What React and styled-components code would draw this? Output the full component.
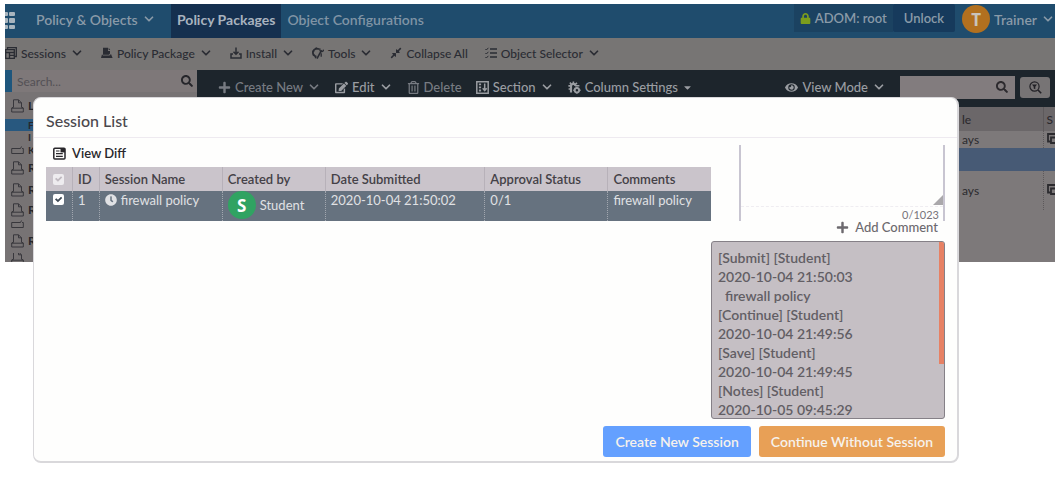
import React, { useState } from "react";
import styled, { createGlobalStyle } from "styled-components";
import { ChevronDown } from "lucide-react";
import {
  FaCaretDown,
  FaClock,
  FaCompressAlt,
  FaEdit,
  FaEye,
  FaLock,
  FaPlus,
  FaRegTrashAlt,
  FaSearch,
} from "react-icons/fa";

const SessionsIcon = () => (
  <svg width="12" height="12" viewBox="0 0 12 12" fill="none" stroke="currentColor">
    <path d="M2.5 2.5V.7h8.8v8.8H9.5M.7 2.7h8.6v8.6H.7zM.7 5.5h8.6M4.5 5.5v5.8M4.5 8.3h4.8" strokeWidth="1.3" />
  </svg>
);

const PackageIcon = () => (
  <svg width="12" height="12" viewBox="0 0 12 12" fill="currentColor">
    <path d="M2 .8h5V4h2v2.6l-1 1.2H2z" />
    <path d="M7.7.8 9.2 3H7.7z" />
    <path d="M1 7.2 0 11h11.6L10 7l-1.5 1.6H2z" />
  </svg>
);

const InstallIcon = () => (
  <svg width="12" height="12" viewBox="0 0 12 12" fill="none" stroke="currentColor" strokeWidth="1.5">
    <path d="M6 .5V7M3.5 4.7 6 7.2l2.5-2.5M3 7H1v4h10V7H9" />
  </svg>
);

const ToolsIcon = () => (
  <svg width="12" height="12" viewBox="0 0 12 12" fill="none" stroke="currentColor">
    <path d="M7 2.2A4 4 0 1 0 4.5 9.6" strokeWidth="1.8" />
    <path d="M4 .6l.6 1.6M.6 4l1.6.7M.8 8.4l1.5-.8M3.2 11.3l.7-1.6" strokeWidth="1.4" />
    <path d="m5 11.6 4.6-8.4" strokeWidth="1.6" />
    <path d="M8 1.4c-.6 2 .4 3.3 2 3.2 1-.1 1.5-.9 1.6-2M9.2 6.2v3.6" strokeWidth="1.3" />
  </svg>
);

const SelectorIcon = () => (
  <svg width="12" height="12" viewBox="0 0 12 12" fill="none" stroke="currentColor">
    <path d="M5 2h7M5 6h7M5 10h7" strokeWidth="1.3" />
    <path d="m.4 2 1 1 2-2.2M.4 6l1 1 2-2.2M.4 10l1 1 2-2.2" />
  </svg>
);

const SectionIcon = () => (
  <svg width="13" height="13" viewBox="0 0 13 13" fill="none" stroke="currentColor">
    <path d="M.8.8h11.4v11.4H.8z" strokeWidth="1.5" />
    <path d="M4 2.5v1.8M4 5.5v1.8M4 8.6v1.8" strokeWidth="2.2" />
    <path d="M8.7 2.5v7M6.7 7.2l2 2.4 2-2.4" strokeWidth="1.5" />
  </svg>
);

const ColumnsIcon = () => (
  <svg width="13" height="13" viewBox="0 0 13 13" fill="none" stroke="currentColor">
    <path d="M3 11.5V5.4a2.2 2.2 0 0 1 4.4-.6" strokeWidth="2.2" />
    <path d="M5.4.4v2.4M.4 4.9h2.4M1.8 1.6l1.4 1.3M9 1.8 7.5 3.2M7 4.7h4.4M.6 8h2" strokeWidth="1.6" />
    <circle cx="8.9" cy="9.2" r="2.2" strokeWidth="1.9" />
    <path d="M8.9 5.8v1.2M8.9 11.6v1.2M5.3 9.2h1.2M11.4 9.2h1.2" strokeWidth="1.5" />
  </svg>
);

const DiffIcon = () => (
  <svg width="13" height="13" viewBox="0 0 13 13" fill="none" stroke="currentColor">
    <rect x=".8" y="1.2" width="11.2" height="10.8" rx="1" strokeWidth="1.5" />
    <path d="M3 4h3.5M3 6.7h6.8M3 9.3h6.8" strokeWidth="1.2" />
    <path d="M7.5 1h4.6v4.4H7.5z" fill="currentColor" stroke="none" />
  </svg>
);

const FileIcon = () => (
  <svg width="13" height="14" viewBox="0 0 13 14" fill="none" stroke="currentColor">
    <path d="M2.5 8.5V.8h5l3 3v4.7M7.5.8v3h3" />
    <path d="M2.5 8 .7 9v4h11.6V9l-1.8-1M.7 9.2h11.6" />
  </svg>
);

const FolderIcon = () => (
  <svg width="13" height="8" viewBox="0 0 13 8" fill="none" stroke="currentColor">
    <path d="M4 2.5H.7v5h11.6v-5H11M3 2.5h6.5L10.5.5" />
  </svg>
);

const FilterSearchIcon = () => (
  <svg width="13" height="13" viewBox="0 0 13 13" fill="none" stroke="currentColor">
    <circle cx="5.5" cy="5.5" r="4.6" strokeWidth="1.2" />
    <path d="m9 9 3.2 3.2" strokeWidth="1.6" />
    <path d="M3 3.5h5L6.3 5.7v2.6L4.7 7.5V5.7z" fill="currentColor" stroke="none" />
  </svg>
);

const ScheduleIcon = () => (
  <svg width="8" height="11" viewBox="0 0 8 11" fill="none" stroke="currentColor" strokeWidth="1.8">
    <path d="M8 1H1v7.5h2.5M8 4.5H4V10h4" />
  </svg>
);

const GridIcon = () => (
  <svg width="11" height="18" viewBox="0 0 11 18" fill="#a9b5be">
    <rect x="-2" y="0" width="5" height="4" rx="1" />
    <rect x="4" y="0" width="6" height="4" rx="1" />
    <rect x="-2" y="6" width="5" height="5" rx="1" />
    <rect x="4" y="6" width="6" height="5" rx="1" />
    <rect x="-2" y="13" width="5" height="4" rx="1" />
    <rect x="4" y="13" width="6" height="4" rx="1" />
  </svg>
);

const Chevron = () => <ChevronDown size={14} strokeWidth={3} />;

const menuItems = [
  { label: "Sessions", icon: <SessionsIcon />, menu: true },
  { label: "Policy Package", icon: <PackageIcon />, menu: true },
  { label: "Install", icon: <InstallIcon />, menu: true },
  { label: "Tools", icon: <ToolsIcon />, menu: true },
  { label: "Collapse All", icon: <FaCompressAlt size={12} /> },
  { label: "Object Selector", icon: <SelectorIcon />, menu: true },
];

const treeRows = [
  { label: "L", height: 27, icon: <FileIcon /> },
  { label: "F", height: 12, small: true, selected: true },
  { label: "I", height: 12, small: true },
  { label: "K", height: 13, small: true, icon: <FolderIcon /> },
  { label: "R", height: 23, icon: <FileIcon /> },
  { label: "R", height: 21, icon: <FileIcon /> },
  { label: "R", height: 19, icon: <FileIcon /> },
  { height: 9, small: true, icon: <FolderIcon /> },
  { label: "R", height: 25, icon: <FileIcon /> },
  { height: 9, icon: <FileIcon /> },
];

const history = [
  "[Submit] [Student]",
  "2020-10-04 21:50:03",
  "  firewall policy",
  "[Continue] [Student]",
  "2020-10-04 21:49:56",
  "[Save] [Student]",
  "2020-10-04 21:49:45",
  "[Notes] [Student]",
  "2020-10-05 09:45:29",
];

export default function App() {
  const [checked, setChecked] = useState(true);
  const [comment, setComment] = useState("");

  return (
    <>
      <GlobalStyle />
      <Stage>
        <Page>
          <TopBar>
            <GridIcon />
            <AppMenu>
              Policy &amp; Objects <Chevron />
            </AppMenu>
            <TabLink href="#packages" $active>
              Policy Packages
            </TabLink>
            <TabLink href="#objects">Object Configurations</TabLink>
            <Spacer />
            <AdomButton>
              <FaLock size={11} /> ADOM: root
            </AdomButton>
            <UnlockButton>Unlock</UnlockButton>
            <UserButton>
              <Avatar>T</Avatar>
              Trainer <Chevron />
            </UserButton>
          </TopBar>

          <MenuBar>
            {menuItems.map((item) => (
              <MenuButton key={item.label}>
                {item.icon}
                {item.label}
                {item.menu && <Chevron />}
              </MenuButton>
            ))}
          </MenuBar>

          <Workspace>
            <Sidebar>
              <SideSearch>
                <input aria-label="Search tree" placeholder="Search..." />
                <FaSearch size={12} />
              </SideSearch>
              {treeRows.map((row, i) => (
                <TreeRow key={i} $height={row.height} $selected={row.selected} $small={row.small}>
                  <TreeIcon>{row.icon}</TreeIcon>
                  {row.label}
                </TreeRow>
              ))}
            </Sidebar>

            <Main>
              <ActionBar>
                <ActionButton><FaPlus size={13} /> Create New <Chevron /></ActionButton>
                <ActionButton $bright><FaEdit size={13} /> Edit <Chevron /></ActionButton>
                <ActionButton><FaRegTrashAlt size={13} /> Delete</ActionButton>
                <ActionButton $bright><SectionIcon /> Section <Chevron /></ActionButton>
                <ActionButton $bright><ColumnsIcon /> Column Settings <FaCaretDown size={11} /></ActionButton>
                <Spacer />
                <ActionButton $bright><FaEye size={13} /> View Mode <Chevron /></ActionButton>
                <PolicySearch>
                  <input aria-label="Search policies" />
                  <FaSearch size={12} />
                </PolicySearch>
                <FilterButton aria-label="Filter search"><FilterSearchIcon /></FilterButton>
              </ActionBar>
              <PolicyTable>
                <thead>
                  <tr>
                    <th />
                    <th>le</th>
                    <th>S</th>
                  </tr>
                </thead>
                <tbody>
                  <PolicyRow $height={17}><td /><td>ays</td><td><ScheduleIcon /></td></PolicyRow>
                  <PolicyRow $height={23} $selected><td colSpan={3} /></PolicyRow>
                  <PolicyRow $height={39}><td /><td>ays</td><td><ScheduleIcon /></td></PolicyRow>
                </tbody>
              </PolicyTable>
            </Main>
          </Workspace>
        </Page>

        <Modal role="dialog" aria-labelledby="session-title">
          <ModalTitle id="session-title">Session List</ModalTitle>
          <ModalBody>
            <Sessions>
              <DiffButton><DiffIcon /> View Diff</DiffButton>
              <SessionTable>
                <colgroup>
                  <col style={{ width: "4%" }} />
                  <col style={{ width: "4%" }} />
                  <col style={{ width: "18.5%" }} />
                  <col style={{ width: "15.5%" }} />
                  <col style={{ width: "24%" }} />
                  <col style={{ width: "18.5%" }} />
                  <col />
                </colgroup>
                <thead>
                  <tr>
                    <th><Check aria-label="Select all" type="checkbox" checked={checked} $faded onChange={(e) => setChecked(e.target.checked)} /></th>
                    <th>ID</th>
                    <th>Session Name</th>
                    <th>Created by</th>
                    <th>Date Submitted</th>
                    <th>Approval Status</th>
                    <th>Comments</th>
                  </tr>
                </thead>
                <tbody>
                  <tr>
                    <td><Check aria-label="Select session 1" type="checkbox" checked={checked} onChange={(e) => setChecked(e.target.checked)} /></td>
                    <td>1</td>
                    <td><IconText><FaClock size={12} /> firewall policy</IconText></td>
                    <td><IconText><Avatar $green>S</Avatar> Student</IconText></td>
                    <td>2020-10-04 21:50:02</td>
                    <td>0/1</td>
                    <td>firewall policy</td>
                  </tr>
                </tbody>
              </SessionTable>
            </Sessions>

            <Comments>
              <CommentBox>
                <textarea
                  aria-label="Comment"
                  maxLength={1023}
                  value={comment}
                  onChange={(e) => setComment(e.target.value)}
                />
                <Counter>{comment.length}/1023</Counter>
              </CommentBox>
              <AddButton><FaPlus size={13} /> Add Comment</AddButton>
              <History>
                {history.map((line, i) => (
                  <p key={i}>{line}</p>
                ))}
              </History>
            </Comments>
          </ModalBody>
          <ModalFooter>
            <FooterButton>Create New Session</FooterButton>
            <FooterButton $orange>Continue Without Session</FooterButton>
          </ModalFooter>
        </Modal>
      </Stage>
    </>
  );
}

const GlobalStyle = createGlobalStyle`
  * {
    box-sizing: border-box;
  }

  body {
    margin: 0;
    background: #fff;
    font-family: Lato, "Liberation Sans", sans-serif;
  }

  button, input, textarea {
    font: inherit;
    color: inherit;
    border: 0;
    padding: 0;
    margin: 0;
    background: none;
    outline: none;
  }

  svg {
    flex-shrink: 0;
  }
`;

/* the page and the dialog share one grid cell */
const Stage = styled.div`
  display: grid;
  grid-template-columns: minmax(0, 1fr);
  align-items: start;
  min-height: 100vh;
  padding: 4px 8px 0 5px;

  > * {
    grid-area: 1 / 1;
  }
`;

const Page = styled.div`
  min-width: 0;
`;

const Spacer = styled.div`
  flex: 1;
`;

const TopBar = styled.header`
  display: flex;
  align-items: center;
  height: 34px;
  background: #1f4c6d;
  color: #8a9aa8;
  font-size: 14px;
  font-weight: 600;
  white-space: nowrap;
  overflow: hidden;
`;

const AppMenu = styled.button`
  display: flex;
  align-items: center;
  gap: 4px;
  width: 155px;
  padding: 0 0 4px 20px;
`;

const TabLink = styled.a`
  display: flex;
  align-items: center;
  height: 100%;
  padding: 0 6px 4px;
  text-decoration: none;
  color: ${({ $active }) => ($active ? "#a9b3bf" : "#8094a5")};
  background: ${({ $active }) => ($active ? "#15304f" : "transparent")};
  font-weight: ${({ $active }) => ($active ? 700 : 600)};
`;

const AdomButton = styled.button`
  display: flex;
  align-items: center;
  gap: 4px;
  height: 28px;
  padding: 0 6px;
  background: #1b4261;
  align-self: flex-start;
  font-size: 13px;

  svg {
    color: #7c9d1c;
  }
`;

const UnlockButton = styled.button`
  height: 28px;
  padding: 0 11px;
  border-radius: 2px;
  background: #163a5c;
  align-self: flex-start;
  font-size: 13px;
`;

const UserButton = styled.button`
  display: flex;
  align-items: center;
  gap: 4px;
  padding: 0 0 4px 7px;
`;

const Avatar = styled.span`
  display: flex;
  align-items: center;
  justify-content: center;
  width: 28px;
  height: 28px;
  border-radius: 50%;
  background: ${({ $green }) => ($green ? "#30a362" : "#b2701f")};
  color: ${({ $green }) => ($green ? "#fff" : "#c9c3bb")};
  font: 700 17px "Noto Sans", sans-serif;
`;

const MenuBar = styled.nav`
  display: flex;
  align-items: center;
  gap: 17px;
  height: 32px;
  padding-bottom: 2px;
  background: #777574;
  color: #2a2c33;
  overflow: hidden;
`;

const MenuButton = styled.button`
  display: flex;
  align-items: center;
  gap: 4px;
  font-size: 12px;
  font-weight: 500;
  white-space: nowrap;
`;

const Workspace = styled.div`
  display: flex;
  background: #7d797a;
`;

const Sidebar = styled.aside`
  width: 192px;
  background: #777374;
  color: #26262b;
`;

const SideSearch = styled.label`
  display: flex;
  align-items: center;
  height: 22px;
  padding: 0 4px 0 5px;
  border-left: 7px solid #1e567d;
  background: #7e7879;
  font-size: 12px;

  input {
    flex: 1;
    min-width: 0;
  }

  input::placeholder {
    color: #535055;
  }
`;

const TreeRow = styled.div`
  display: flex;
  align-items: center;
  gap: 4px;
  height: ${({ $height }) => $height}px;
  padding-left: 6px;
  background: ${({ $selected }) => ($selected ? "#28587f" : "transparent")};
  font-size: ${({ $small }) => ($small ? 10 : 12)}px;
  font-weight: 700;
  line-height: 12px;
  overflow: hidden;
`;

const TreeIcon = styled.span`
  display: flex;
  width: 13px;
  color: #38373c;
`;

const Main = styled.main`
  flex: 1;
  min-width: 0;
`;

const ActionBar = styled.div`
  display: flex;
  align-items: center;
  gap: 14px;
  height: 37px;
  padding: 0 5px 3px 21px;
  background: #1d252c;
  overflow: hidden;
`;

const ActionButton = styled.button`
  display: flex;
  align-items: center;
  gap: 4px;
  color: ${({ $bright }) => ($bright ? "#9a9da2" : "#777b82")};
  font-size: 13px;
  font-weight: 500;
  white-space: nowrap;
`;

const PolicySearch = styled.label`
  display: flex;
  align-items: center;
  width: 115px;
  height: 23px;
  padding: 0 7px;
  background: #827c7e;
  color: #2c2a2e;

  input {
    flex: 1;
    min-width: 0;
  }
`;

const FilterButton = styled.button`
  display: flex;
  align-items: center;
  justify-content: center;
  width: 30px;
  height: 21px;
  margin-left: -9px;
  border-radius: 3px;
  background: #777475;
  color: #222126;
`;

const PolicyTable = styled.table`
  width: 100%;
  border-collapse: collapse;
  table-layout: fixed;
  color: #2b2a2e;
  font-size: 12px;
  line-height: 13px;

  th {
    height: 24px;
    padding: 0 0 0 3px;
    background: #6b6769;
    text-align: left;
    font-weight: 500;
  }

  th:nth-child(2) {
    width: 84px;
  }

  th:nth-child(3) {
    width: 12px;
    border-left: 1px solid #5d595b;
  }

  td {
    padding: 0 0 0 3px;
    overflow: hidden;
  }

  td:nth-child(3) {
    border-left: 1px dotted #5d595b;
  }
`;

const PolicyRow = styled.tr`
  height: ${({ $height }) => $height}px;
  background: ${({ $selected }) => ($selected ? "#475a75" : "transparent")};
`;

const Modal = styled.section`
  z-index: 1;
  min-width: 0;
  margin: 93px 96px 0 28px;
  border: 1px solid #d9d8db;
  border-width: 1px 2px 2px 1px;
  border-radius: 8px;
  background: #fefefd;
  color: #4b484d;
`;

const ModalTitle = styled.h2`
  height: 40px;
  margin: 0;
  padding: 3px 12px 0;
  border-bottom: 1px solid #eeeaf0;
  font-size: 16px;
  font-weight: 500;
  line-height: 40px;
`;

const ModalBody = styled.div`
  display: flex;
  padding: 7px 12px 0;
`;

const Sessions = styled.div`
  flex: 1;
  min-width: 0;
`;

const DiffButton = styled.button`
  display: flex;
  align-items: center;
  gap: 6px;
  height: 22px;
  padding: 0 7px 6px;
  color: #29272b;
  font-size: 13px;
  font-weight: 600;
`;

const SessionTable = styled.table`
  width: 100%;
  border-collapse: collapse;
  table-layout: fixed;
  font-size: 13px;
  line-height: 18px;
  white-space: nowrap;

  th, td {
    padding: 0 5px;
    text-align: left;
  }

  th:first-child, td:first-child {
    padding: 0 7px;
  }

  th {
    height: 24px;
    background: #cac4cb;
    color: #444147;
    font-weight: 600;
  }

  th + th {
    border-left: 1px solid #b7b1b9;
  }

  td {
    height: 30px;
    background: #66727f;
    color: #e0e1e4;
    vertical-align: top;
  }

  td + td {
    border-left: 1px dotted #a2a7af;
  }
`;

const IconText = styled.span`
  display: flex;
  align-items: center;
  gap: 4px;
`;

const Check = styled.input`
  appearance: none;
  display: block;
  width: 11px;
  height: 11px;
  margin: 3px 0;
  border-radius: 2px;
  background: ${({ $faded }) => ($faded ? "#eeecef" : "#fff")};

  &:checked::before {
    content: "";
    display: block;
    width: 11px;
    height: 11px;
    background: ${({ $faded }) => ($faded ? "#c0bac1" : "#3d4854")};
    clip-path: polygon(18% 50%, 30% 38%, 45% 53%, 73% 24%, 84% 36%, 45% 76%);
  }
`;

const Comments = styled.div`
  display: flex;
  flex-direction: column;
  align-items: flex-end;
  width: 234px;
`;

const CommentBox = styled.div`
  position: relative;
  width: 206px;
  border: 2px solid #c8c5d1;
  border-width: 0 2px;

  textarea {
    display: block;
    width: 100%;
    height: 62px;
    border-bottom: 1px dashed #efedf1;
    font-size: 13px;
    resize: none;
  }

  /* resize grip */
  &::after {
    content: "";
    position: absolute;
    top: 50px;
    right: 0;
    width: 10px;
    height: 10px;
    background: #aaa8ab;
    clip-path: polygon(100% 0, 100% 100%, 0 100%);
  }
`;

const Counter = styled.div`
  height: 14px;
  padding-right: 4px;
  color: #77747a;
  font-size: 11px;
  line-height: 16px;
  text-align: right;
`;

const AddButton = styled.button`
  display: flex;
  align-items: center;
  gap: 6px;
  height: 20px;
  padding: 0 7px 8px;
  color: #6c696e;
  font-size: 13px;
  font-weight: 500;
`;

const History = styled.div`
  position: relative;
  width: 100%;
  height: 178px;
  padding: 6px;
  border: 1px solid #858087;
  border-radius: 3px;
  background: #c5bfc4;
  color: #625e64;
  font-size: 14px;
  font-weight: 600;
  line-height: 19px;
  white-space: pre;
  overflow: hidden;

  p {
    margin: 0;
  }

  /* scroll thumb */
  &::after {
    content: "";
    position: absolute;
    top: 0;
    right: 0;
    width: 5px;
    height: 122px;
    background: #e78164;
  }
`;

const ModalFooter = styled.footer`
  display: flex;
  justify-content: flex-end;
  gap: 8px;
  padding: 7px 12px 4px;
`;

const FooterButton = styled.button`
  height: 31px;
  padding: 0 12px;
  border-radius: 3px;
  background: ${({ $orange }) => ($orange ? "#e8a056" : "#64a0ff")};
  color: #f6f2ec;
  font-size: 14px;
  font-weight: 600;
`;
